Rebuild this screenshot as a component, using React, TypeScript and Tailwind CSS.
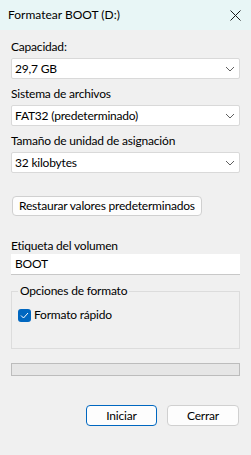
import React from 'react';

const font = { fontFamily: 'Lato, "Noto Sans", sans-serif' };

const Chevron: React.FC = () => (
  <svg width="10" height="6" viewBox="0 0 10 6" className="shrink-0">
    <path d="M1 1 L5 5 L9 1" fill="none" stroke="#606060" strokeWidth="1" />
  </svg>
);

const Select: React.FC<{ value: string; className?: string }> = ({ value, className }) => (
  <div
    className={`flex items-center justify-between h-[21px] bg-white border border-[#d9d9d9] rounded-[2px] pl-[3px] pr-[4px] ${className ?? ''}`}
  >
    <span className="text-[12px] leading-4 text-black">{value}</span>
    <Chevron />
  </div>
);

const Label: React.FC<{ text: string; className?: string }> = ({ text, className }) => (
  <div className={`text-[12px] leading-4 text-black ${className ?? ''}`}>{text}</div>
);

const App: React.FC = () => {
  return (
    <div className="w-[251px] h-[455px] bg-[#f0f0f0] flex flex-col overflow-hidden tracking-[-0.2px]" style={font}>
      {/* Title bar */}
      <div className="h-[30px] bg-[#e8f6f6] flex items-center justify-between pl-[8px] pr-[10px] shrink-0">
        <span className="text-[12px] leading-4 text-black tracking-normal">Formatear BOOT (D:)</span>
        <svg width="11" height="11" viewBox="0 0 11 11">
          <path d="M0.5 0.5 L10.5 10.5 M10.5 0.5 L0.5 10.5" stroke="#1a1a1a" strokeWidth="1" />
        </svg>
      </div>

      <div className="flex flex-col px-[11px]">
        <Label text="Capacidad:" className="mt-[9px]" />
        <Select value="29,7 GB" className="mt-[3px]" />

        <Label text="Sistema de archivos" className="mt-[7px]" />
        <Select value="FAT32 (predeterminado)" className="mt-[3px]" />

        <Label text="Tamaño de unidad de asignación" className="mt-[7px]" />
        <Select value="32 kilobytes" className="mt-[3px]" />

        <div className="mt-[23px] flex">
          <button className="h-[20px] px-[6px] bg-[#fdfdfd] border border-[#d0d0d0] rounded-[4px] text-[12px] leading-4 text-black ml-[1px]">
            Restaurar valores predeterminados
          </button>
        </div>

        <Label text="Etiqueta del volumen" className="mt-[22px]" />
        <div className="h-[21px] bg-white border-b border-[#c8c8c8] flex items-center pl-[4px]">
          <span className="text-[12px] leading-4 text-black">BOOT</span>
        </div>

        {/* Group box */}
        <div className="mt-[16px] relative h-[58px] border border-[#dcdcdc]">
          <span className="absolute -top-[9px] left-[6px] px-[2px] bg-[#f0f0f0] text-[12px] leading-4 text-black">
            Opciones de formato
          </span>
          <div className="flex items-center gap-[3px] mt-[15px] ml-[6px]">
            <div className="w-[13px] h-[13px] rounded-[3px] bg-[#0067c0] flex items-center justify-center">
              <svg width="9" height="7" viewBox="0 0 9 7">
                <path d="M1 3.5 L3.5 6 L8 1" fill="none" stroke="#ffffff" strokeWidth="1" />
              </svg>
            </div>
            <span className="text-[12px] leading-4 text-black">Formato rápido</span>
          </div>
        </div>

        {/* Progress bar */}
        <div className="mt-[14px] h-[13px] bg-[#e6e6e6] border border-[#bcbcbc]" />

        {/* Buttons */}
        <div className="mt-[29px] flex justify-end gap-[10px] pr-[1px]">
          <button className="w-[71px] h-[21px] bg-[#fdfdfd] border border-[#0067c0] rounded-[4px] text-[12px] leading-4 text-black">
            Iniciar
          </button>
          <button className="w-[72px] h-[21px] bg-[#fdfdfd] border border-[#d0d0d0] rounded-[4px] text-[12px] leading-4 text-black">
            Cerrar
          </button>
        </div>
      </div>
    </div>
  );
};

export default App;
